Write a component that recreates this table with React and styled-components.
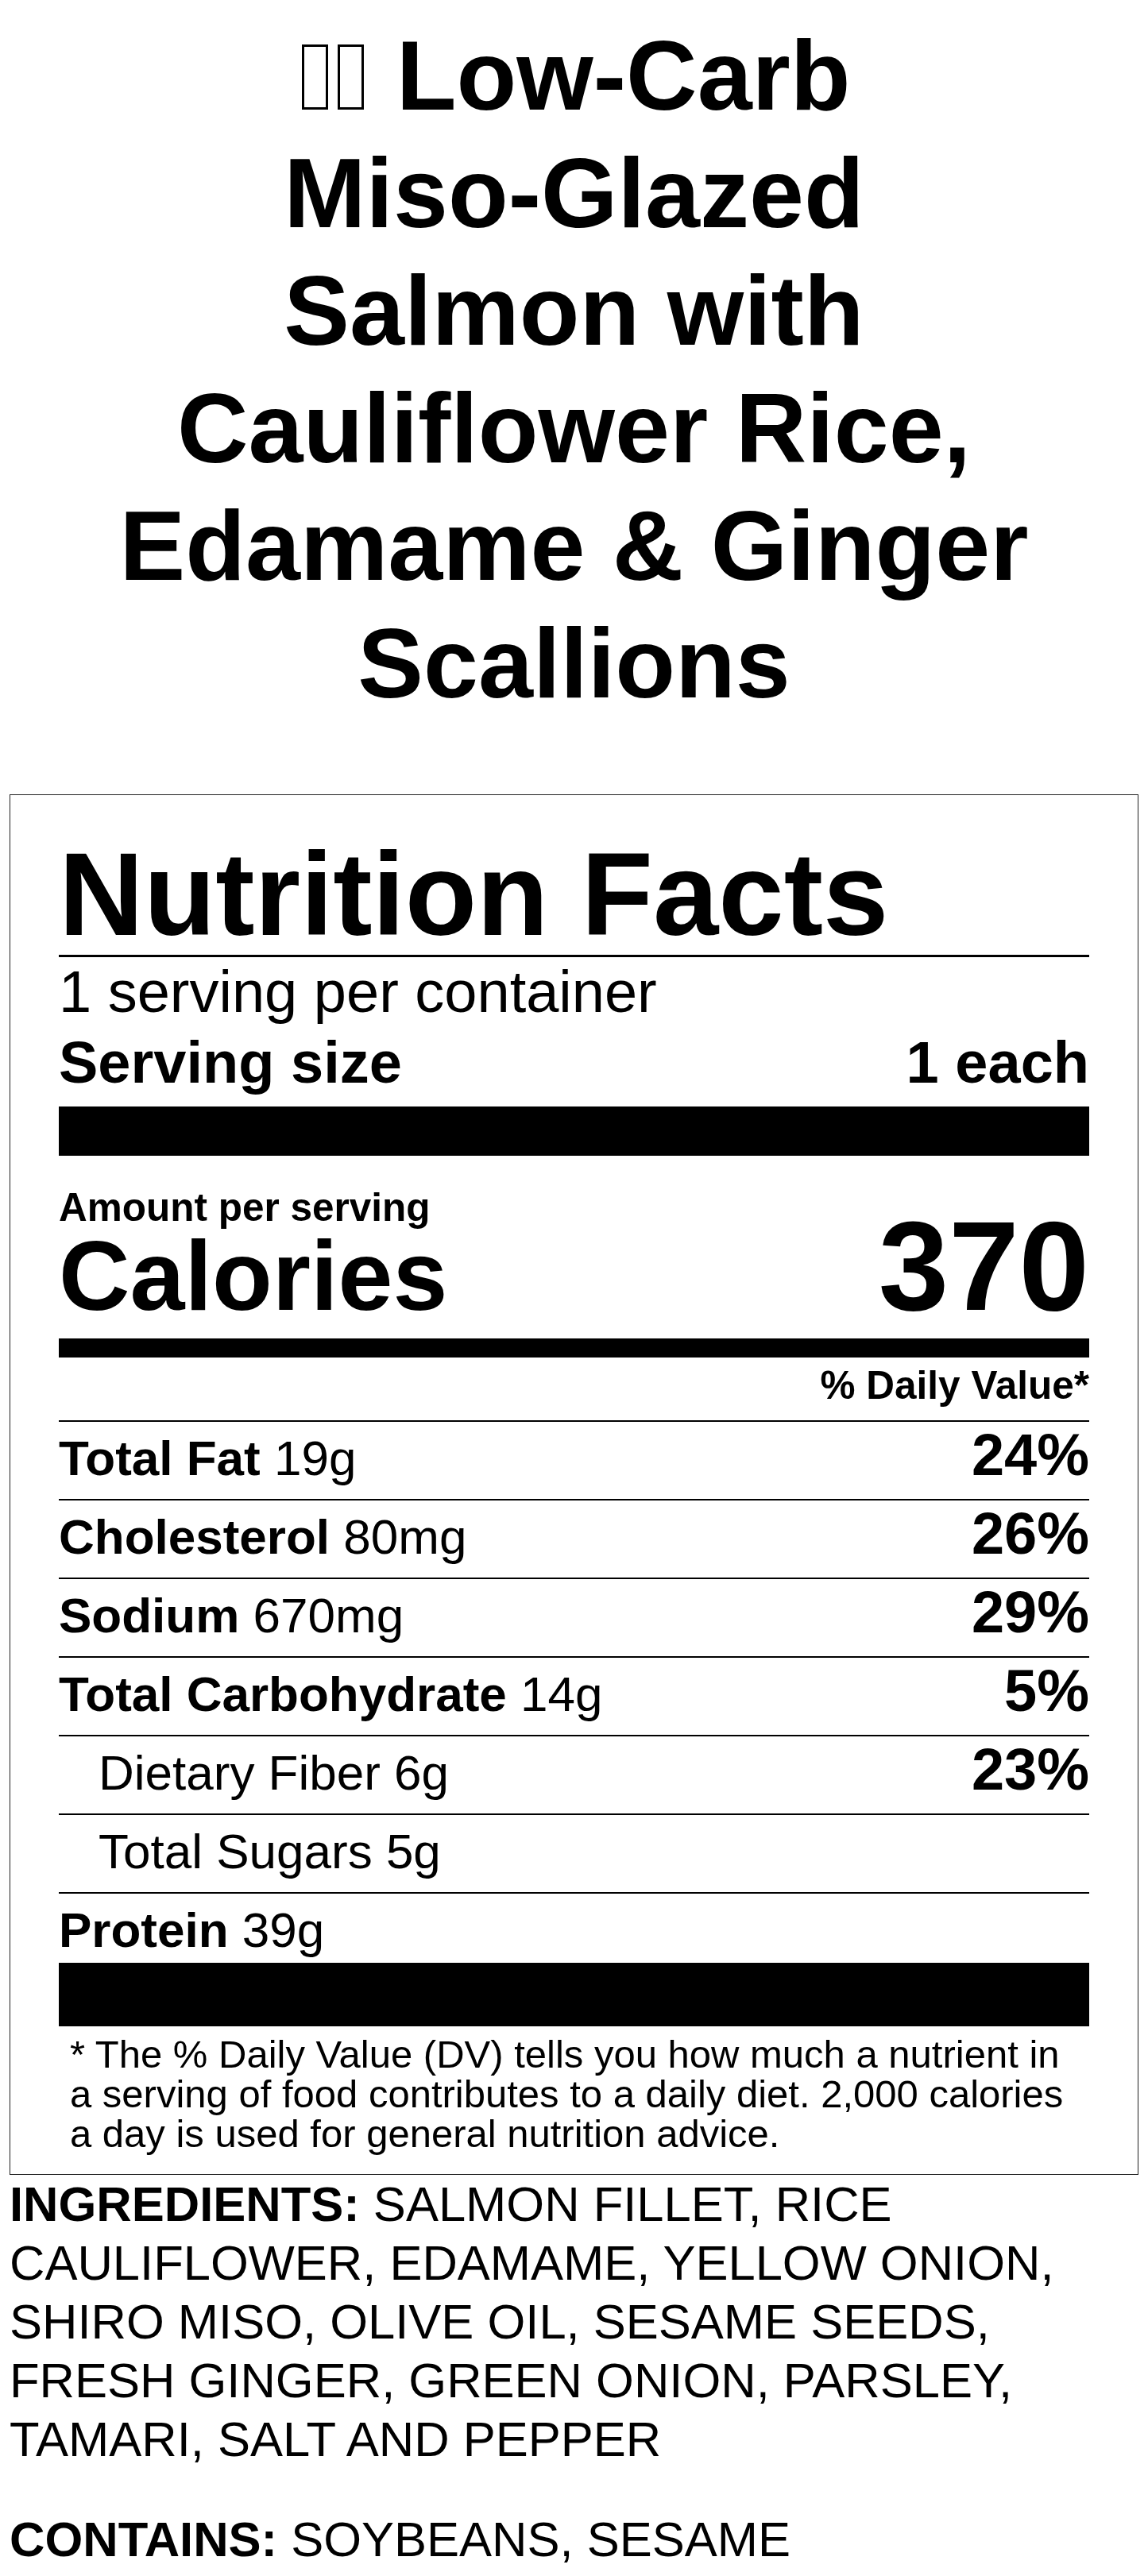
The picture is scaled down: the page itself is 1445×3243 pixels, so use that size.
import styled, { createGlobalStyle } from "styled-components";

const GlobalStyle = createGlobalStyle`
    body {
        margin: 0;
        background: #fff;
        color: #000;
        font-family: "Liberation Sans", Arial, sans-serif;
    }
`;

const Page = styled.div`
    padding: 0 12px 40px;
`;

const Title = styled.h1`
    max-width: 1160px;
    margin: 21px auto 91px;
    font-size: 124px;
    line-height: 148px;
    font-weight: bold;
    text-align: center;
`;

const Keep = styled.span`
    white-space: nowrap;
`;

// the emoji in the title show up as missing-glyph boxes
const Tofu = styled.span`
    display: inline-block;
    box-sizing: border-box;
    width: 33px;
    height: 82px;
    margin: 0 6px;
    border: 3px solid #000;
    vertical-align: baseline;
`;

const Label = styled.section`
    border: 1.5px solid #222;
    padding: 14px 61px 26px;
`;

const Heading = styled.h2`
    margin: 0;
    padding: 37px 0 2px;
    font-size: 148px;
    line-height: 1;
    font-weight: bold;
    border-bottom: 3px solid #000;
`;

const Line = styled.div`
    display: flex;
    justify-content: space-between;
    align-items: baseline;
    font-size: 74px;
    font-weight: ${({ bold }) => (bold ? "bold" : "normal")};
    line-height: 1.2;
`;

const Bar = styled.div`
    height: ${({ h }) => h}px;
    background: #000;
    margin-top: ${({ mt }) => mt || 0}px;
`;

const CaloriesRow = styled.div`
    display: flex;
    justify-content: space-between;
    align-items: last baseline;
    font-weight: bold;
    line-height: 1;
    padding: 40px 0 11px;
`;

const CalText = styled.div`
    display: flex;
    flex-direction: column;
`;

const Small = styled.span`
    font-size: 49.5px;
`;

const CalLabel = styled.span`
    font-size: 124px;
`;

const CalValue = styled.span`
    font-size: 159px;
`;

const DvHead = styled.div`
    text-align: right;
    font-size: 49.5px;
    font-weight: bold;
    line-height: 1.2;
    padding: 5px 0 15px;
`;

const Row = styled.div`
    display: flex;
    justify-content: space-between;
    align-items: baseline;
    border-top: 2px solid #000;
    padding: 5px 0 ${({ last }) => (last ? 0 : 10)}px ${({ indent }) => (indent ? 50 : 0)}px;
    font-size: 62px;
    line-height: 82px;
`;

const Name = styled.span`
    font-weight: ${({ bold }) => (bold ? "bold" : "normal")};
`;

const Pct = styled.span`
    font-size: 74px;
    line-height: 74px;
    font-weight: bold;
`;

const Footnote = styled.p`
    margin: 0;
    padding: 11px 0 0 14px;
    font-size: 49px;
    line-height: 49.6px;
`;

const Ingredients = styled.p`
    margin: 0;
    font-size: 61.5px;
    line-height: 74px;
`;

const Contains = styled(Ingredients)`
    margin-top: 52px;
`;

const rows = [
    { label: "Total Fat", amount: "19g", pct: "24%", bold: true },
    { label: "Cholesterol", amount: "80mg", pct: "26%", bold: true },
    { label: "Sodium", amount: "670mg", pct: "29%", bold: true },
    { label: "Total Carbohydrate", amount: "14g", pct: "5%", bold: true },
    { label: "Dietary Fiber", amount: "6g", pct: "23%", indent: true },
    { label: "Total Sugars", amount: "5g", indent: true },
    { label: "Protein", amount: "39g", bold: true, last: true },
];

const App = () => {
    return (
        <>
            <GlobalStyle />
            <Page>
                <Title>
                    <span role="img" aria-label="🫛🫚">
                        <Tofu />
                        <Tofu />
                    </span>{" "}
                    <Keep>Low-Carb</Keep> <Keep>Miso-Glazed</Keep> Salmon with Cauliflower Rice,
                    Edamame &amp; Ginger Scallions
                </Title>
                <Label>
                    <Heading>Nutrition Facts</Heading>
                    <Line>1 serving per container</Line>
                    <Line bold>
                        <span>Serving size</span>
                        <span>1 each</span>
                    </Line>
                    <Bar h={62} mt={10} />
                    <CaloriesRow>
                        <CalText>
                            <Small>Amount per serving</Small>
                            <CalLabel>Calories</CalLabel>
                        </CalText>
                        <CalValue>370</CalValue>
                    </CaloriesRow>
                    <Bar h={24} />
                    <DvHead>% Daily Value*</DvHead>
                    {rows.map((r) => (
                        <Row key={r.label} indent={r.indent} last={r.last}>
                            <span>
                                <Name bold={r.bold}>{r.label}</Name> {r.amount}
                            </span>
                            {r.pct && <Pct>{r.pct}</Pct>}
                        </Row>
                    ))}
                    <Bar h={80} />
                    <Footnote>
                        * The % Daily Value (DV) tells you how much a nutrient in a serving of food
                        contributes to a daily diet. 2,000 calories a day is used for general nutrition
                        advice.
                    </Footnote>
                </Label>
                <Ingredients>
                    <b>INGREDIENTS:</b> SALMON FILLET, RICE CAULIFLOWER, EDAMAME, YELLOW ONION, SHIRO
                    MISO, OLIVE OIL, SESAME SEEDS, FRESH GINGER, GREEN ONION, PARSLEY, TAMARI, SALT AND
                    PEPPER
                </Ingredients>
                <Contains>
                    <b>CONTAINS:</b> SOYBEANS, SESAME
                </Contains>
            </Page>
        </>
    );
};

export default App;
